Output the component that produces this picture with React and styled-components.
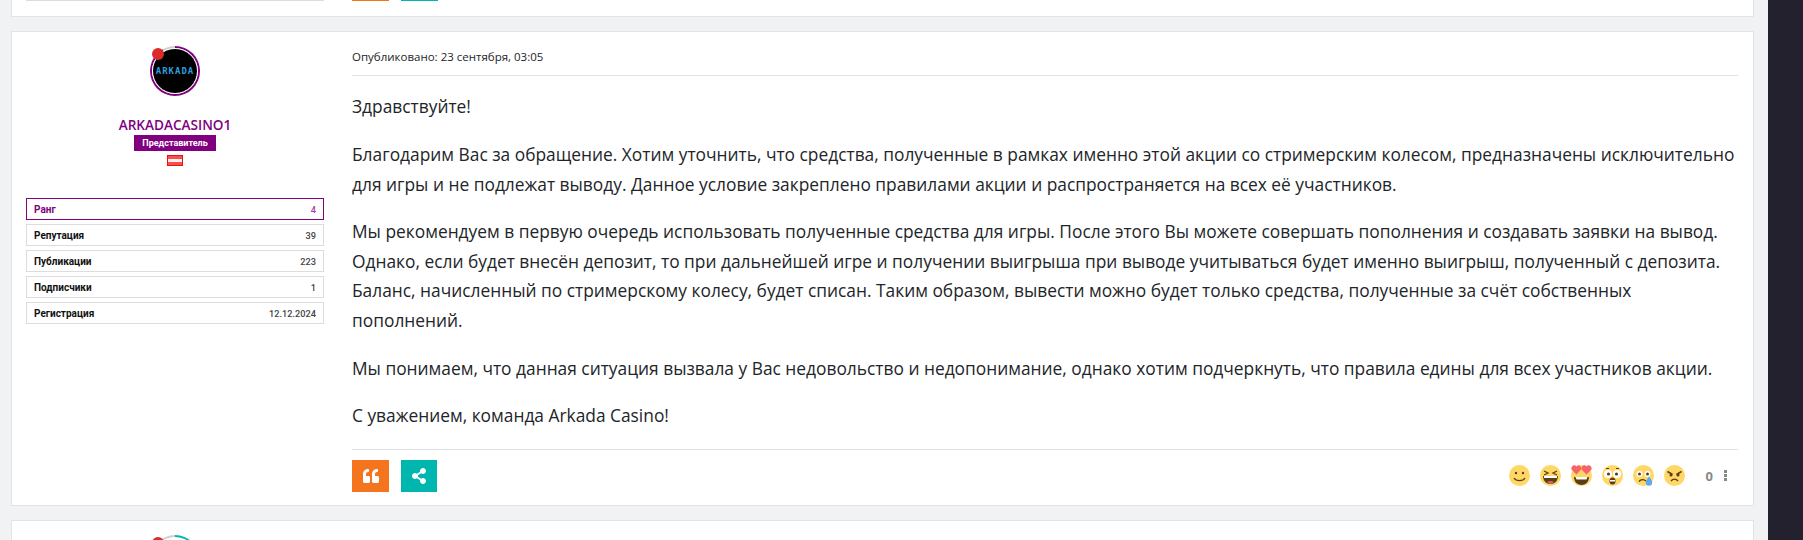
import styled, { createGlobalStyle } from "styled-components";
import { FaQuoteLeft, FaShareAlt } from "react-icons/fa";

const stats = [
    { label: "Ранг", value: "4", active: true },
    { label: "Репутация", value: "39" },
    { label: "Публикации", value: "223" },
    { label: "Подписчики", value: "1" },
    { label: "Регистрация", value: "12.12.2024" },
];

function Face({ children }) {
    return (
        <svg width="21" height="21" viewBox="0 0 21 21">
            <circle cx="10.5" cy="10.5" r="10.5" fill="#FFD764" />
            {children}
        </svg>
    );
}

const dark = "#5a3e1c";

const emojis = [
    <Face key="smile">
        <circle cx="7" cy="8" r="1.2" fill={dark} />
        <circle cx="14" cy="8" r="1.2" fill={dark} />
        <path d="M5 13c2 3.4 9 3.4 11 0" stroke={dark} strokeWidth="1.3" fill="none" />
    </Face>,
    <Face key="laugh">
        <path d="M4 6l4 2-4 2M17 6l-4 2 4 2" stroke={dark} strokeWidth="1.3" fill="none" />
        <path d="M3 11h15c0 5-3.500 8-7.500 8S3 16 3 11z" fill={dark} />
        <path d="M4 11h13v2H4z" fill="#fff" />
        <path d="M7 17c2-1.500 5-1.500 7 0l-3.500 2z" fill="#e8606a" />
    </Face>,
    <Face key="love">
        <path d="M3 12h15c0 5-3.500 8-7.500 8S3 17 3 12z" fill={dark} />
        <path d="M4.500 12h12l-1 2.500h-10z" fill="#fff" />
        <path d="M5.500 9.500L0.500 4.500C-0.500 1.500 3.500-1.500 5.500 1.500 7.500-1.500 11 1.500 10 4.500z" fill="#F7636A" />
        <path d="M15.500 9.500L10.500 4.500C9.500 1.500 13.500-1.500 15.500 1.500 17.500-1.500 21.500 1.500 20.500 4.500z" fill="#F7636A" />
    </Face>,
    <Face key="wow">
        <circle cx="6" cy="9" r="4" fill="#fff" />
        <circle cx="15" cy="9" r="4" fill="#fff" />
        <circle cx="6.500" cy="9" r="1.600" fill={dark} />
        <circle cx="14.500" cy="9" r="1.600" fill={dark} />
        <path d="M4 3.500h3M14 3.500h3" stroke={dark} strokeWidth="1" />
        <ellipse cx="10.500" cy="16" rx="3" ry="3.500" fill={dark} />
        <path d="M8 15h5v1.500H8z" fill="#fff" />
    </Face>,
    <Face key="sad">
        <circle cx="6.500" cy="9" r="3" fill="#fff" />
        <circle cx="14.500" cy="9" r="3" fill="#fff" />
        <circle cx="6.500" cy="9" r="1.500" fill={dark} />
        <circle cx="14.500" cy="9" r="1.500" fill={dark} />
        <path d="M6 16.500c2-2.500 5-2.500 7-.5" stroke={dark} strokeWidth="1.300" fill="none" />
        <path d="M16 11.500c2 3 3.200 4.500 3.200 6a3.200 3.200 0 0 1-6.400 0c0-1.500 1.200-3 3.200-6z" fill="#5DA8EE" />
    </Face>,
    <Face key="angry">
        <path d="M3.500 6.500l5 3M17.500 6.500l-5 3" stroke={dark} strokeWidth="1.500" />
        <circle cx="7" cy="10" r="1.500" fill={dark} />
        <circle cx="14" cy="10" r="1.500" fill={dark} />
        <path d="M7 16c2-2.500 5-2.500 7 0" stroke={dark} strokeWidth="1.300" fill="none" />
    </Face>,
];

export default function App() {
    return (
        <>
            <GlobalStyle />
            <Page>
                <Content>
                    <ClippedCard>
                        <ClippedStat />
                        <ClippedButtons>
                            <ClippedButton color="#F4751E" />
                            <ClippedButton color="#00B7AF" />
                        </ClippedButtons>
                    </ClippedCard>
                    <Card>
                        <Sidebar>
                            <Avatar ring="#800080" to={330}>
                                <AvatarInner>
                                    <AvatarLogo>ARKADA</AvatarLogo>
                                </AvatarInner>
                                <StatusDot />
                            </Avatar>
                            <UserName>ARKADACASINO1</UserName>
                            <Role>Представитель</Role>
                            <Flag />
                            <Stats>
                                {stats.map((s) => (
                                    <Stat key={s.label} active={s.active}>
                                        <StatLabel active={s.active}>{s.label}</StatLabel>
                                        <StatValue active={s.active}>{s.value}</StatValue>
                                    </Stat>
                                ))}
                            </Stats>
                        </Sidebar>
                        <Main>
                            <Meta>Опубликовано: 23 сентября, 03:05</Meta>
                            <Body>
                                <p>Здравствуйте!</p>
                                <p>Благодарим Вас за обращение. Хотим уточнить, что средства, полученные в рамках именно этой акции со стримерским колесом, предназначены исключительно для игры и не подлежат выводу. Данное условие закреплено правилами акции и распространяется на всех её участников.</p>
                                <p>Мы рекомендуем в первую очередь использовать полученные средства для игры. После этого Вы можете совершать пополнения и создавать заявки на вывод. Однако, если будет внесён депозит, то при дальнейшей игре и получении выигрыша при выводе учитываться будет именно выигрыш, полученный с депозита. Баланс, начисленный по стримерскому колесу, будет списан. Таким образом, вывести можно будет только средства, полученные за счёт собственных пополнений.</p>
                                <p>Мы понимаем, что данная ситуация вызвала у Вас недовольство и недопонимание, однако хотим подчеркнуть, что правила едины для всех участников акции.</p>
                                <p>С уважением, команда Arkada Casino!</p>
                            </Body>
                            <Footer>
                                <Actions>
                                    <ActionButton color="#F4751E" wide><FaQuoteLeft /></ActionButton>
                                    <ActionButton color="#00B7AF"><FaShareAlt /></ActionButton>
                                </Actions>
                                <Reactions>
                                    {emojis}
                                    <Count>0</Count>
                                    <Dots><i /><i /><i /></Dots>
                                </Reactions>
                            </Footer>
                        </Main>
                    </Card>
                    <NextCard>
                        <Avatar ring="#00B7AF" to={40}>
                            <StatusDot />
                        </Avatar>
                    </NextCard>
                </Content>
                <Rail />
            </Page>
        </>
    );
}

const GlobalStyle = createGlobalStyle`
    html, body {
        margin: 0;
        height: 540px;
        overflow: hidden;
        background: #F1F2F4;
    }
    * {
        box-sizing: border-box;
    }
`;

const Page = styled.div`
    display: flex;
    height: 540px;
    overflow: hidden;
    font-family: "Open Sans", "Noto Sans", sans-serif;
    color: #212529;
`;

const Content = styled.div`
    flex: 1;
    padding: 0 14px 0 11px;
    display: flex;
    flex-direction: column;
    gap: 14px;
`;

const Rail = styled.div`
    width: 35px;
    background: #24212E;
`;

const ClippedCard = styled.div`
    height: 17px;
    flex-shrink: 0;
    display: flex;
    background: #fff;
    border: 1px solid #E2E3E6;
    border-top: none;
    padding-left: 14px;
`;

const ClippedStat = styled.div`
    width: 298px;
    height: 1px;
    background: #DDD;
`;

const ClippedButtons = styled.div`
    display: flex;
    gap: 12px;
    margin-left: 28px;
`;

const ClippedButton = styled.div`
    width: 37px;
    height: 1px;
    background: ${(p) => p.color};
`;

const Card = styled.div`
    height: 475px;
    flex-shrink: 0;
    display: flex;
    background: #fff;
    border: 1px solid #E2E3E6;
`;

const Sidebar = styled.div`
    width: 340px;
    padding: 14px 28px 0 14px;
    display: flex;
    flex-direction: column;
    align-items: center;
`;

const Avatar = styled.div`
    position: relative;
    flex-shrink: 0;
    width: 50px;
    height: 50px;
    padding: 2px;
    border-radius: 50%;
    background: conic-gradient(${(p) => p.ring} 0deg ${(p) => p.to}deg, #CFCFCF ${(p) => p.to}deg 360deg);
    &::after {
        content: "";
        position: absolute;
        inset: 2px;
        border-radius: 50%;
        background: #fff;
        z-index: 0;
    }
`;

const AvatarInner = styled.div`
    position: relative;
    z-index: 1;
    width: 100%;
    height: 100%;
    border: 1px solid #fff;
    border-radius: 50%;
    background: #000;
    display: flex;
    align-items: center;
    justify-content: center;
`;

const AvatarLogo = styled.span`
    font-family: "DejaVu Sans Mono", monospace;
    font-size: 9px;
    font-weight: 700;
    letter-spacing: 1px;
    color: #2D9CDB;
`;

const StatusDot = styled.span`
    position: absolute;
    z-index: 2;
    left: 2px;
    top: 2px;
    width: 12px;
    height: 12px;
    border-radius: 50%;
    background: #DC2A2A;
`;

const UserName = styled.div`
    margin-top: 19px;
    font-size: 13.600px;
    font-weight: 600;
    line-height: 20px;
    color: #800080;
`;

const Role = styled.div`
    width: 82px;
    height: 16px;
    background: #800080;
    color: #fff;
    font-family: Roboto, sans-serif;
    font-size: 9px;
    font-weight: 700;
    line-height: 16px;
    text-align: center;
`;

const Flag = styled.div`
    width: 16px;
    height: 11px;
    margin-top: 4px;
    border: 1px solid #F01010;
    background: linear-gradient(#F45050 0 30%, #FBEDED 30% 70%, #F45050 70%);
`;

const Stats = styled.div`
    width: 100%;
    margin-top: 32px;
    display: flex;
    flex-direction: column;
    gap: 4px;
`;

const Stat = styled.div`
    height: 22px;
    padding: 0 7px;
    display: flex;
    align-items: center;
    justify-content: space-between;
    border: ${(p) => (p.active ? "1px solid #800080" : "1px solid #DDD")};
    font-family: Roboto, sans-serif;
`;

const StatLabel = styled.span`
    font-size: 10px;
    font-weight: 700;
    color: ${(p) => (p.active ? "#800080" : "#111")};
`;

const StatValue = styled.span`
    font-size: 9.200px;
    font-weight: 500;
    color: ${(p) => (p.active ? "#A63CA6" : "#444")};
`;

const Main = styled.div`
    flex: 1;
    padding-right: 15px;
    display: flex;
    flex-direction: column;
`;

const Meta = styled.div`
    height: 45px;
    padding-top: 15px;
    font-size: 11.500px;
    line-height: 20px;
    border-bottom: 1px solid #E2E3E6;
`;

const Body = styled.div`
    flex: 1;
    padding-top: 16px;
    font-size: 17.350px;
    line-height: 29.600px;
    p {
        margin: 0 0 18px;
    }
`;

const Footer = styled.div`
    height: 57px;
    padding-top: 10px;
    display: flex;
    justify-content: space-between;
    border-top: 1px solid #E2E3E6;
`;

const Actions = styled.div`
    display: flex;
    gap: 12px;
`;

const ActionButton = styled.div`
    width: ${(p) => (p.wide ? "37px" : "36px")};
    height: 32px;
    display: flex;
    align-items: center;
    justify-content: center;
    background: ${(p) => p.color};
    color: #fff;
    font-size: 16px;
`;

const Reactions = styled.div`
    height: 32px;
    display: flex;
    align-items: center;
    gap: 10px;
    padding-right: 11px;
`;

const Count = styled.span`
    margin-left: 11px;
    font-size: 13px;
    font-weight: 700;
    color: #888;
`;

const Dots = styled.span`
    display: flex;
    flex-direction: column;
    gap: 1px;
    margin-left: 1px;
    i {
        width: 3px;
        height: 3px;
        background: #888;
    }
`;

const NextCard = styled.div`
    flex: 1;
    flex-shrink: 0;
    display: flex;
    background: #fff;
    border: 1px solid #E2E3E6;
    padding: 14px 0 0 138px;
`;
